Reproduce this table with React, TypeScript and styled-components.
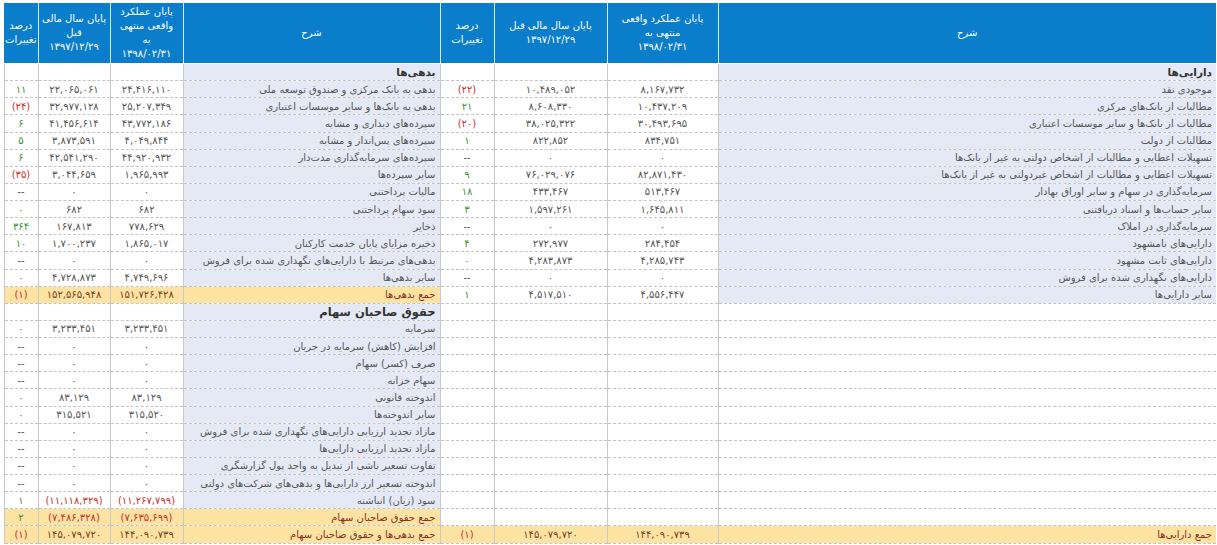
import React from "react";
import styled, { createGlobalStyle } from "styled-components";

const GlobalStyle = createGlobalStyle`
  html, body {
    margin: 0;
    padding: 0;
    background: #ffffff;
  }
  body {
    font-family: "DejaVu Sans", Tahoma, sans-serif;
    direction: rtl;
  }
`;

type Kind = "section" | "bigSection" | "item" | "total" | "empty";

interface Line {
  kind: Kind;
  label?: string;
  cur?: string;
  prev?: string;
  pct?: string;
}

const faDigits = "۰۱۲۳۴۵۶۷۸۹";
const toFa = (s: string) => s.replace(/[0-9]/g, (d) => faDigits[Number(d)]);

const assets: Line[] = [
  { kind: "section", label: "دارایی‌ها" },
  { kind: "item", label: "موجودی نقد", cur: "8,167,732", prev: "10,489,052", pct: "(22)" },
  { kind: "item", label: "مطالبات از بانک‌های مرکزی", cur: "10,437,209", prev: "8,608,330", pct: "21" },
  { kind: "item", label: "مطالبات از بانک‌ها و سایر موسسات اعتباری", cur: "30,493,695", prev: "38,025,322", pct: "(20)" },
  { kind: "item", label: "مطالبات از دولت", cur: "834,751", prev: "822,852", pct: "1" },
  { kind: "item", label: "تسهیلات اعطایی و مطالبات از اشخاص دولتی به غیر از بانک‌ها", cur: "0", prev: "0", pct: "--" },
  { kind: "item", label: "تسهیلات اعطایی و مطالبات از اشخاص غیردولتی به غیر از بانک‌ها", cur: "82,871,430", prev: "76,029,076", pct: "9" },
  { kind: "item", label: "سرمایه‌گذاری در سهام و سایر اوراق بهادار", cur: "513,467", prev: "433,467", pct: "18" },
  { kind: "item", label: "سایر حساب‌ها و اسناد دریافتنی", cur: "1,645,811", prev: "1,597,261", pct: "3" },
  { kind: "item", label: "سرمایه‌گذاری در املاک", cur: "0", prev: "0", pct: "--" },
  { kind: "item", label: "دارایی‌های نامشهود", cur: "284,454", prev: "272,977", pct: "4" },
  { kind: "item", label: "دارایی‌های ثابت مشهود", cur: "4,285,743", prev: "4,283,873", pct: "0" },
  { kind: "item", label: "دارایی‌های نگهداری شده برای فروش", cur: "0", prev: "0", pct: "--" },
  { kind: "item", label: "سایر دارایی‌ها", cur: "4,556,447", prev: "4,517,510", pct: "1" },
  ...Array.from({ length: 13 }, () => ({ kind: "empty" as Kind })),
  { kind: "total", label: "جمع دارایی‌ها", cur: "144,090,739", prev: "145,079,720", pct: "(1)" },
];

const liabilities: Line[] = [
  { kind: "section", label: "بدهی‌ها" },
  { kind: "item", label: "بدهی به بانک مرکزی و صندوق توسعه ملی", cur: "24,416,110", prev: "22,065,061", pct: "11" },
  { kind: "item", label: "بدهی به بانک‌ها و سایر موسسات اعتباری", cur: "25,207,349", prev: "32,977,128", pct: "(24)" },
  { kind: "item", label: "سپرده‌های دیداری و مشابه", cur: "43,772,186", prev: "41,456,614", pct: "6" },
  { kind: "item", label: "سپرده‌های پس‌انداز و مشابه", cur: "4,049,844", prev: "3,873,591", pct: "5" },
  { kind: "item", label: "سپرده‌های سرمایه‌گذاری مدت‌دار", cur: "44,920,932", prev: "42,541,290", pct: "6" },
  { kind: "item", label: "سایر سپرده‌ها", cur: "1,965,993", prev: "3,044,659", pct: "(35)" },
  { kind: "item", label: "مالیات پرداختنی", cur: "0", prev: "0", pct: "--" },
  { kind: "item", label: "سود سهام پرداختنی", cur: "682", prev: "682", pct: "0" },
  { kind: "item", label: "ذخایر", cur: "778,629", prev: "167,813", pct: "364" },
  { kind: "item", label: "ذخیره مزایای پایان خدمت کارکنان", cur: "1,865,017", prev: "1,700,237", pct: "10" },
  { kind: "item", label: "بدهی‌های مرتبط با دارایی‌های نگهداری شده برای فروش", cur: "0", prev: "0", pct: "--" },
  { kind: "item", label: "سایر بدهی‌ها", cur: "4,749,696", prev: "4,728,873", pct: "0" },
  { kind: "total", label: "جمع بدهی‌ها", cur: "151,726,428", prev: "152,565,948", pct: "(1)" },
  { kind: "bigSection", label: "حقوق صاحبان سهام" },
  { kind: "item", label: "سرمایه", cur: "3,233,451", prev: "3,233,451", pct: "0" },
  { kind: "item", label: "افزایش (کاهش) سرمایه در جریان", cur: "0", prev: "0", pct: "--" },
  { kind: "item", label: "صرف (کسر) سهام", cur: "0", prev: "0", pct: "--" },
  { kind: "item", label: "سهام خزانه", cur: "0", prev: "0", pct: "--" },
  { kind: "item", label: "اندوخته قانونی", cur: "83,129", prev: "83,129", pct: "0" },
  { kind: "item", label: "سایر اندوخته‌ها", cur: "315,520", prev: "315,521", pct: "0" },
  { kind: "item", label: "مازاد تجدید ارزیابی دارایی‌های نگهداری شده برای فروش", cur: "0", prev: "0", pct: "--" },
  { kind: "item", label: "مازاد تجدید ارزیابی دارایی‌ها", cur: "0", prev: "0", pct: "--" },
  { kind: "item", label: "تفاوت تسعیر ناشی از تبدیل به واحد پول گزارشگری", cur: "0", prev: "0", pct: "--" },
  { kind: "item", label: "اندوخته تسعیر ارز دارایی‌ها و بدهی‌های شرکت‌های دولتی", cur: "0", prev: "0", pct: "--" },
  { kind: "item", label: "سود (زیان) انباشته", cur: "(11,267,799)", prev: "(11,118,329)", pct: "1" },
  { kind: "total", label: "جمع حقوق صاحبان سهام", cur: "(7,635,699)", prev: "(7,486,328)", pct: "2" },
  { kind: "total", label: "جمع بدهی‌ها و حقوق صاحبان سهام", cur: "144,090,739", prev: "145,079,720", pct: "(1)" },
];

// column widths, right to left
const colWidths = [498, 111, 113, 54, 257, 73, 72, 34];

const Page = styled.div`
  padding: 3px 1px 0 4px;
`;

const Table = styled.table`
  width: 1212px;
  table-layout: fixed;
  border-collapse: collapse;
  font-size: 10px;
  color: #555555;
`;

const Col = styled.col<{ $w: number }>`
  width: ${({ $w }) => $w}px;
`;

const HeadCell = styled.th`
  background: #0b7ecb;
  color: #ffffff;
  font-weight: normal;
  font-size: 10px;
  line-height: 14px;
  height: 60px;
  padding: 0;
  text-align: center;
  vertical-align: middle;
  white-space: nowrap;
  border-left: 1px solid #dce8f5;
  border-bottom: 1px solid #ffffff;
  &:last-child {
    border-left: none;
  }
`;

const Row = styled.tr`
  height: 17.14px;
`;

const toneBg = (kind: Kind, desc: boolean) => {
  if (kind === "total") return "#fde3a2";
  if (kind === "empty") return "#ffffff";
  return desc ? "#e4e9f5" : "#ffffff";
};

const DescCell = styled.td<{ $kind: Kind }>`
  background: ${({ $kind }) => toneBg($kind, true)};
  text-align: right;
  padding: 0 4px;
  white-space: nowrap;
  overflow: hidden;
  border-bottom: 1px dashed #c4c4c4;
  border-left: 1px solid #c8c8c8;
  color: ${({ $kind }) =>
    $kind === "total" ? "#8b2e22" : $kind === "item" ? "#555555" : "#333333"};
  font-weight: ${({ $kind }) => ($kind === "section" || $kind === "bigSection" ? "bold" : "normal")};
  font-size: ${({ $kind }) => ($kind === "bigSection" ? "11.5px" : $kind === "section" ? "10.5px" : "10px")};
`;

const NumCell = styled.td<{ $kind: Kind; $tone?: "neg" | "pos" | "none" }>`
  background: ${({ $kind }) => toneBg($kind, false)};
  direction: ltr;
  text-align: center;
  padding: 0 1px;
  white-space: nowrap;
  overflow: hidden;
  border-bottom: 1px dashed #c4c4c4;
  border-left: 1px solid #c8c8c8;
  color: ${({ $kind, $tone }) =>
    $tone === "neg" ? "#c8302c" : $tone === "pos" ? "#3f8f3a" : $kind === "total" ? "#7d3b28" : "#555555"};
`;

const numTone = (v?: string) => (v && v.startsWith("(") ? "neg" : "none");
const pctTone = (v?: string) => (!v || v === "--" ? "none" : v.startsWith("(") ? "neg" : "pos");

const Half: React.FC<{ line: Line }> = ({ line }) => {
  const k = line.kind;
  return (
    <>
      <DescCell $kind={k}>{line.label ?? ""}</DescCell>
      <NumCell $kind={k} $tone={numTone(line.cur)}>{line.cur ? toFa(line.cur) : ""}</NumCell>
      <NumCell $kind={k} $tone={numTone(line.prev)}>{line.prev ? toFa(line.prev) : ""}</NumCell>
      <NumCell $kind={k} $tone={pctTone(line.pct)}>{line.pct ? toFa(line.pct) : ""}</NumCell>
    </>
  );
};

const Lines: React.FC<{ parts: string[] }> = ({ parts }) => (
  <>
    {parts.map((p, i) => (
      <React.Fragment key={i}>
        {i > 0 && <br />}
        {toFa(p)}
      </React.Fragment>
    ))}
  </>
);

const headers: string[][] = [
  ["شرح"],
  ["پایان عملکرد واقعی", "منتهی به", "1398/02/31"],
  ["پایان سال مالی قبل", "1397/12/29"],
  ["درصد", "تغییرات"],
  ["شرح"],
  ["پایان عملکرد", "واقعی منتهی", "به", "1398/02/31"],
  ["پایان سال مالی", "قبل", "1397/12/29"],
  ["درصد", "تغییرات"],
];

const App: React.FC = () => (
  <>
    <GlobalStyle />
    <Page>
      <Table>
        <colgroup>
          {colWidths.map((w, i) => (
            <Col key={i} $w={w} />
          ))}
        </colgroup>
        <thead>
          <tr>
            {headers.map((h, i) => (
              <HeadCell key={i}>
                <Lines parts={h} />
              </HeadCell>
            ))}
          </tr>
        </thead>
        <tbody>
          {liabilities.map((l, i) => (
            <Row key={i}>
              <Half line={assets[i]} />
              <Half line={l} />
            </Row>
          ))}
        </tbody>
      </Table>
    </Page>
  </>
);

export default App;
